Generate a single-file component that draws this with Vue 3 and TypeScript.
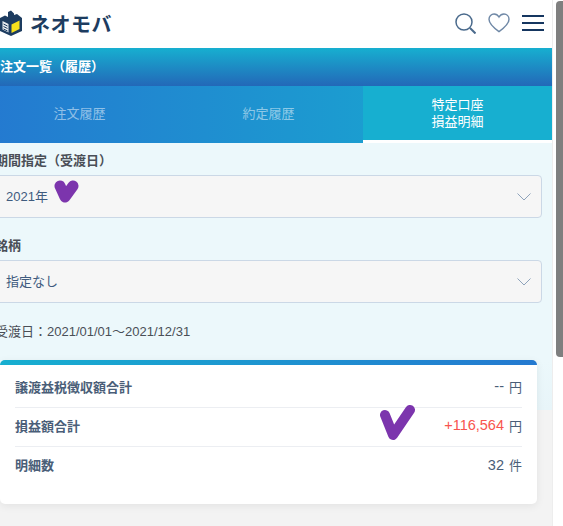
<script setup lang="ts">
const tabs = [
  { label: '注文履歴', active: false },
  { label: '約定履歴', active: false },
  { label: '特定口座\n損益明細', active: true },
]

const filters = [
  { label: '期間指定（受渡日）', value: '2021年' },
  { label: '銘柄', value: '指定なし' },
]
</script>

<template>
  <div class="viewport">
    <div class="page">
      <header class="top">
        <div class="logo">
          <svg class="logo-mark" width="22" height="26" viewBox="0 0 22 26">
            <path d="M0 8l5-2.500L8 7V2l3-1.500 3 3V5l3-1 5 4v13l-11 5L0 21z" fill="#1d3c60" />
            <path d="M2.500 11l6 3v8.500l-6-3z" fill="#e6ebf0" />
            <path d="M11.500 14.500l8-4v8.500l-8 4z" fill="#f7e11c" />
            <path d="M3.500 14l4 2M3.500 16.500l4 2M3.500 19l4 2" stroke="#1d3c60" stroke-width="1" />
          </svg>
          <span class="logo-text">ネオモバ</span>
        </div>
        <div class="top-icons">
          <svg width="21" height="21" viewBox="0 0 21 21" fill="none" stroke="#4a6a8c" stroke-width="1.500">
            <circle cx="9" cy="9" r="8" />
            <path d="M15 15l5.500 5.500" stroke-width="2" />
          </svg>
          <svg width="22" height="20" viewBox="0 0 23 21" fill="none" stroke="#6f88a6" stroke-width="1.500">
            <path d="M11.500 19.500C6 15.500 1 11.500 1 6.500 1 3.200 3.500 1 6.300 1c2.200 0 4 1.200 5.200 3.200C12.700 2.200 14.500 1 16.700 1 19.500 1 22 3.200 22 6.500c0 5-5 9-10.500 13z" />
          </svg>
          <div class="burger"><i></i><i></i><i></i></div>
        </div>
      </header>

      <div class="title-bar">注文一覧（履歴）</div>

      <nav class="tabs">
        <div v-for="t in tabs" :key="t.label" class="tab" :class="{ active: t.active }">{{ t.label }}</div>
      </nav>

      <section class="body">
        <div v-for="f in filters" :key="f.label" class="field">
          <div class="field-label">{{ f.label }}</div>
          <div class="select">
            <span>{{ f.value }}</span>
            <svg width="14" height="8" viewBox="0 0 14 8" fill="none" stroke="#8ea3bb" stroke-width="1">
              <path d="M.5.500L7 7l6.500-6.500" />
            </svg>
          </div>
        </div>
        <p class="range">受渡日：2021/01/01〜2021/12/31</p>
      </section>

      <div class="lower">
        <div class="card">
          <div class="row">
            <span class="name">譲渡益税徴収額合計</span>
            <span class="val"><span class="num">--</span><em>円</em></span>
          </div>
          <div class="row">
            <span class="name">損益額合計</span>
            <span class="val"><span class="num plus">+116,564</span><em>円</em></span>
          </div>
          <div class="row">
            <span class="name">明細数</span>
            <span class="val"><span class="num">32</span><em>件</em></span>
          </div>
        </div>
      </div>
    </div>

    <div class="scrollbar"><div class="thumb"></div></div>

    <svg class="mark mark-a" width="28" height="26" viewBox="0 0 28 26" fill="none" stroke="#7c35ad" stroke-linecap="round" stroke-linejoin="round">
      <path d="M7 7l5 11L20 7" stroke-width="11" />
    </svg>
    <svg class="mark mark-b" width="38" height="40" viewBox="0 0 38 40" fill="none" stroke="#7c35ad" stroke-linecap="round" stroke-linejoin="round">
      <path d="M7 11l8 20L32 6" stroke-width="10" />
    </svg>
  </div>
</template>

<style>
html, body {
  margin: 0;
  overflow: hidden;
  background: #fff;
}
</style>

<style scoped>
.viewport {
  position: relative;
  width: 563px;
  height: 526px;
  overflow: hidden;
  font-family: "Liberation Sans", "Noto Sans CJK JP", sans-serif;
}
.page {
  width: 567px;
  margin-left: -15px;
}
.top {
  height: 48px;
  display: flex;
  align-items: center;
  justify-content: space-between;
  background: #fff;
  padding: 0 8px 2px 15px;
  box-sizing: border-box;
}
.logo {
  display: flex;
  align-items: center;
  gap: 8px;
}
.logo-text {
  font-size: 20px;
  font-weight: 700;
  letter-spacing: 0.5px;
  color: #1d3c60;
}
.top-icons {
  display: flex;
  align-items: center;
  gap: 12px;
}
.burger {
  width: 22px;
  display: flex;
  flex-direction: column;
  gap: 5px;
}
.burger i {
  display: block;
  height: 2px;
  background: #153660;
}
.title-bar {
  height: 38px;
  line-height: 38px;
  padding-left: 15px;
  font-size: 13px;
  font-weight: 700;
  color: #fff;
  background: linear-gradient(180deg, #17afd0, #2368b8);
}
.tabs {
  display: flex;
  height: 57px;
  background: linear-gradient(90deg, #2479d0, #17afd0);
}
.tab {
  width: 189px;
  box-sizing: border-box;
  padding-bottom: 3px;
  display: flex;
  align-items: center;
  justify-content: center;
  text-align: center;
  white-space: pre-line;
  font-size: 13px;
  line-height: 17px;
  color: rgba(255, 255, 255, 0.5);
}
.tab.active {
  background: #17afd0;
  color: #fff;
  border-bottom: 3px solid #fff;
  padding-bottom: 0;
}
.body {
  background: #ecf8fb;
  padding: 8px 10px 0;
  height: 217px;
  box-sizing: border-box;
}
.field {
  margin-bottom: 18px;
}
.field-label {
  font-size: 13px;
  line-height: 20px;
  font-weight: 700;
  color: #4a4f57;
  margin-bottom: 4px;
}
.select {
  height: 43px;
  box-sizing: border-box;
  border: 1px solid #cbd8e6;
  border-radius: 4px;
  background: #f6f6f6;
  display: flex;
  align-items: center;
  justify-content: space-between;
  padding: 0 10px 2px;
  font-size: 13px;
  color: #3f5b7e;
}
.select svg {
  margin-top: 2px;
}
.range {
  margin: 0;
  font-size: 13px;
  color: #4a4f57;
}
.lower {
  background: linear-gradient(180deg, #ecf8fb 0, #e8f5f9 50px, #f3f3f3 50px);
  height: 166px;
  padding: 0 15px;
}
.card {
  background: linear-gradient(90deg, #17afd0, #2479d0) top / 100% 5px no-repeat, #fff;
  border-radius: 5px;
  box-shadow: 0 2px 8px rgba(0, 0, 0, 0.07);
  height: 144px;
  width: 537px;
  box-sizing: border-box;
  padding: 9px 15px 0;
}
.row {
  display: flex;
  justify-content: space-between;
  align-items: center;
  height: 39px;
  box-sizing: border-box;
  padding-bottom: 4px;
  border-bottom: 1px solid #eceef2;
  font-size: 13px;
  color: #4a5e78;
}
.row:last-child {
  border-bottom: 0;
}
.name {
  font-weight: 700;
}
.val {
  display: flex;
  align-items: center;
  gap: 5px;
}
.num {
  font-size: 14.5px;
}
.plus {
  color: #f8544e;
}
.val em {
  font-style: normal;
}
.scrollbar {
  position: absolute;
  top: 0;
  right: 0;
  width: 11px;
  height: 526px;
  background: #fff;
  border-left: 1px solid #ededed;
  box-sizing: border-box;
}
.thumb {
  position: absolute;
  top: 1px;
  left: 3px;
  width: 8px;
  height: 356px;
  background: #7f7f7f;
  border-radius: 4px 0 0 4px;
}
.mark {
  position: absolute;
}
.mark-a {
  left: 53px;
  top: 179px;
}
.mark-b {
  left: 378px;
  top: 404px;
}
</style>
